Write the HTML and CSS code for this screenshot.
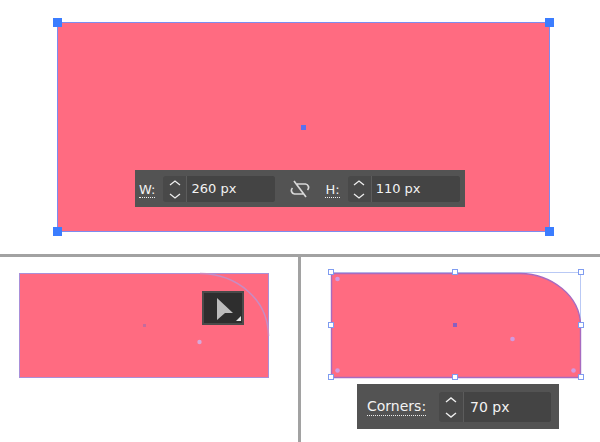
FILE: index.html
```html
<!DOCTYPE html>
<html lang="en">
<head>
  <meta charset="UTF-8">
  <title>Rounded corners</title>
  <link rel="stylesheet" href="styles.css">
</head>
<body>
  <div class="page">
    <!-- step 1: size -->
    <section class="panel panel-top">
      <svg class="art" viewBox="0 0 600 254">
        <rect x="57.5" y="22.5" width="492" height="209" fill="#ff6b81" stroke="#7c8cf0"/>
        <rect x="53" y="18" width="9" height="9" fill="#3b7dff"/>
        <rect x="545" y="18" width="9" height="9" fill="#3b7dff"/>
        <rect x="53" y="227" width="9" height="9" fill="#3b7dff"/>
        <rect x="545" y="227" width="9" height="9" fill="#3b7dff"/>
        <rect x="301" y="125" width="5" height="5" fill="#5a70f0"/>
      </svg>
      <div class="bar bar-size">
        <span class="label label-w">W:</span>
        <div class="spin">
          <div class="arrows">
            <svg width="12" height="26" viewBox="0 0 12 26"><path d="M1 9l5-4 5 4M1 18l5 4 5-4" fill="none" stroke="#eee" stroke-width="1.3"/></svg>
          </div>
          <div class="value value-wide">260 px</div>
        </div>
        <svg class="link" width="20" height="18" viewBox="0 0 20 18">
          <path d="M7 4h8.500a3.500 3.500 0 0 1 2 6M13 14H4.500a3.500 3.500 0 0 1-2-6M4 1l12 16" fill="none" stroke="#d8d8d8" stroke-width="1.700"/>
        </svg>
        <span class="label label-h">H:</span>
        <div class="spin">
          <div class="arrows">
            <svg width="12" height="26" viewBox="0 0 12 26"><path d="M1 9l5-4 5 4M1 18l5 4 5-4" fill="none" stroke="#eee" stroke-width="1.3"/></svg>
          </div>
          <div class="value value-wide">110 px</div>
        </div>
      </div>
    </section>

    <div class="panel-row">
      <!-- step 2: drag the widget -->
      <section class="panel panel-left">
        <svg class="art" viewBox="0 257 298 185">
          <rect x="19.500" y="273.500" width="249" height="104" fill="#ff6b81" stroke="#a98fd8"/>
          <path d="M200 273.500C238 274 268 300 268.500 336" fill="none" stroke="#c78cc4" stroke-width="1.500"/>
          <rect x="143" y="324" width="3" height="3" fill="#c56a9c"/>
          <circle cx="199.500" cy="342" r="2.200" fill="#d9a8d8"/>
        </svg>
        <div class="cursor-tip">
          <svg width="34" height="24" viewBox="0 0 34 24">
            <path d="M9 0l16 15h-8l-8 7z" fill="#bdbdbd"/>
            <path d="M33 18v5h-5z" fill="#e4e4e4"/>
          </svg>
        </div>
      </section>

      <!-- step 3: corners value -->
      <section class="panel panel-right">
        <svg class="art" viewBox="301 257 299 185">
          <rect x="331.500" y="272.500" width="249" height="104.500" fill="none" stroke="#b9c9f5"/>
          <path d="M331.500 273.500H520C552 274 580 296 580.500 325V377.500H331.500z" fill="#ff6b81" stroke="#a76bc0" stroke-width="1.400"/>
          <g fill="#fff" stroke="#7f9cf0">
            <rect x="328.500" y="269.500" width="5" height="5"/>
            <rect x="452.500" y="269.500" width="5" height="5"/>
            <rect x="578.500" y="269.500" width="5" height="5"/>
            <rect x="328.500" y="322.500" width="5" height="5"/>
            <rect x="578.500" y="322.500" width="5" height="5"/>
            <rect x="328.500" y="374.500" width="5" height="5"/>
            <rect x="452.500" y="374.500" width="5" height="5"/>
            <rect x="578.500" y="374.500" width="5" height="5"/>
          </g>
          <g fill="#d29ae0">
            <circle cx="337.500" cy="279" r="2.300"/>
            <circle cx="337.500" cy="370.500" r="2.300"/>
            <circle cx="573.500" cy="370.500" r="2.300"/>
            <circle cx="512.500" cy="339" r="2.300"/>
          </g>
          <rect x="453" y="323" width="4" height="4" fill="#8a5fc0"/>
        </svg>
        <div class="bar bar-corners">
          <span class="label label-c">Corners:</span>
          <div class="spin spin-big">
            <div class="arrows arrows-big">
              <svg width="12" height="30" viewBox="0 0 12 30"><path d="M1 10l5-4 5 4M1 21l5 4 5-4" fill="none" stroke="#eee" stroke-width="1.400"/></svg>
            </div>
            <div class="value value-big">70 px</div>
          </div>
        </div>
      </section>
    </div>
  </div>
</body>
</html>
```

FILE: styles.css
```css
body {
  margin: 0;
  background: #fff;
  font-family: "DejaVu Sans", sans-serif;
}
.page {
  width: 600px;
  height: 442px;
  overflow: hidden;
}
.panel {
  position: relative;
}
.panel-top {
  height: 254px;
  border-bottom: 3px solid #a2a2a2;
}
.panel-row {
  display: flex;
  height: 185px;
}
.panel-left {
  width: 298px;
  border-right: 3px solid #a2a2a2;
}
.panel-right {
  flex: 1;
}
.art {
  display: block;
  width: 100%;
  height: 100%;
}
.bar {
  position: absolute;
  display: flex;
  align-items: center;
  background: #535353;
  color: #f2f2f2;
}
.bar-size {
  left: 135px;
  top: 170px;
  width: 330px;
  height: 37px;
  font-size: 13px;
}
.bar-corners {
  left: 56px;
  top: 127px;
  width: 202px;
  height: 45px;
  font-size: 14px;
}
.label {
  border-bottom: 1px dotted #eee;
  line-height: 14px;
}
.label-w {
  margin-left: 4px;
  margin-top: 3px;
}
.label-h {
  margin-left: 15px;
  margin-top: 3px;
}
.label-c {
  margin-left: 10px;
  line-height: 18px;
}
.spin {
  display: flex;
  margin-left: 8px;
  background: #494949;
  border-radius: 3px;
}
.spin-big {
  margin-left: 13px;
}
.arrows {
  display: flex;
  justify-content: center;
  width: 24px;
  height: 26px;
  border-right: 1px solid #5c5c5c;
  box-sizing: border-box;
}
.arrows-big {
  width: 25px;
  height: 30px;
}
.value {
  padding-left: 4px;
  box-sizing: border-box;
  background: #444;
  border-radius: 0 3px 3px 0;
}
.value-wide {
  width: 88px;
  line-height: 26px;
}
.value-big {
  width: 87px;
  line-height: 30px;
  padding-left: 6px;
}
.link {
  margin-left: 15px;
}
.cursor-tip {
  position: absolute;
  left: 202px;
  top: 34px;
  width: 42px;
  height: 34px;
  box-sizing: border-box;
  padding: 5px 0 0 4px;
  background: #2e2e2e;
  border: 2px solid #4a4a4a;
}
```
